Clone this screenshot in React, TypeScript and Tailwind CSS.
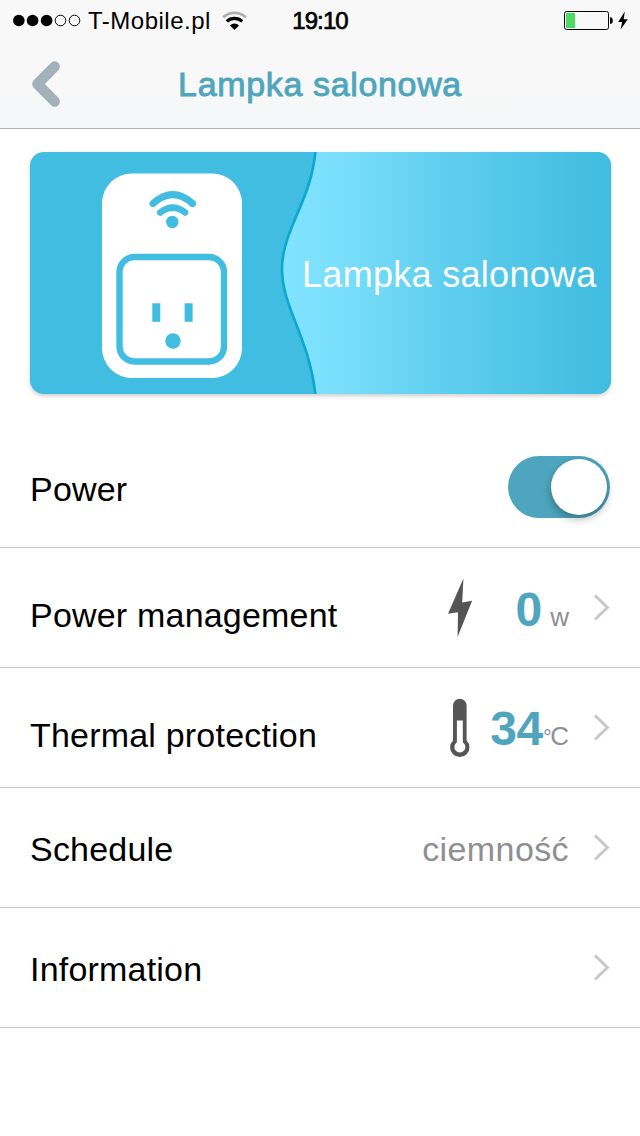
import React, { useState } from 'react';
import clsx from 'clsx';

interface RowProps {
  label: string;
  low?: boolean;
  onClick?: () => void;
  children?: React.ReactNode;
}

const SignalDots = () => (
  <svg width="70" height="14" viewBox="0 0 70 14">
    <g fill="#000">
      <circle cx="5.8" cy="7.5" r="5.8" />
      <circle cx="19.6" cy="7.5" r="5.8" />
      <circle cx="33.6" cy="7.5" r="5.8" />
    </g>
    <g fill="none" stroke="#000" strokeWidth="1">
      <circle cx="47.5" cy="7.5" r="5.3" />
      <circle cx="61.5" cy="7.5" r="5.3" />
    </g>
  </svg>
);

const StatusWifi = () => (
  <svg className="mt-[1px]" width="26" height="20" viewBox="0 0 26 20" fill="none">
    <path d="M1.2 6.4A16.6 16.6 0 0 1 23.8 6.4" stroke="#b0b0b0" strokeWidth="2.8" />
    <path d="M4.8 10.4A11.2 11.2 0 0 1 20.2 10.4" stroke="#000" strokeWidth="3.1" />
    <path d="M8 14.4A6.2 6.2 0 0 1 17 14.4L12.5 19Z" fill="#000" />
  </svg>
);

const Battery = () => (
  <svg width="66" height="22" viewBox="0 0 66 22">
    <rect x="0.5" y="2.5" width="44" height="18" rx="2" fill="none" stroke="#000" />
    <rect x="2" y="4" width="9" height="15" fill="#4cd964" />
    <path d="M46 8.2h1.2q1.6.8 1.6 3.3t-1.6 3.3H46z" fill="#000" />
    <path d="M60.8 2.4L54.2 13h4L56.6 20.4L63.8 10.2h-4.1z" fill="#000" />
  </svg>
);

const Chevron = () => (
  <svg className="shrink-0" width="18" height="28" viewBox="0 0 18 28" fill="none">
    <path d="M2 1.5L14.4 13.5L2 25.5" stroke="#c7c7cc" strokeWidth="3" />
  </svg>
);

const Bolt = () => (
  <svg width="40" height="60" viewBox="0 0 40 60">
    <path d="M23.4 0.6L8 35.8L18 34.2L17.6 59L32.1 22.8L22.2 24.6Z" fill="#555" />
  </svg>
);

const Thermometer = () => (
  <svg width="40" height="60" viewBox="0 0 40 60">
    <path d="M13 7.5a6.8 6.8 0 0 1 13.6 0V42.5a9.7 9.7 0 1 1 -13.6 0z" fill="#555" />
    <path d="M16.9 22.5h5.9V44.3a5.5 5.5 0 1 1 -5.9 0z" fill="#fff" />
  </svg>
);

const Banner = ({ name }: { name: string }) => (
  <div className="relative ml-[30px] mr-[29px] mt-[23px] h-[242px] overflow-hidden rounded-[14px] bg-[#41bde1] shadow-[0_2px_4px_rgba(0,0,0,0.2)]">
    <svg width="581" height="242" viewBox="0 0 581 242" fill="none">
      <defs>
        <linearGradient id="wave" gradientUnits="userSpaceOnUse" x1="252" y1="0" x2="581" y2="0">
          <stop offset="0" stopColor="#80e4ff" />
          <stop offset="0.17" stopColor="#7adffb" />
          <stop offset="0.5" stopColor="#5fceee" />
          <stop offset="1" stopColor="#3fbce0" />
        </linearGradient>
      </defs>
      <path d="M286 0C281 50 252 78 252 117C252 155 279 185 286 242H581V0Z" fill="url(#wave)" />
      <path d="M285.5 -1C281 50 252 78 252 117C252 155 279 185 285.5 243" stroke="#0da5d1" strokeWidth="2.6" />

      <rect x="72" y="21.5" width="140" height="204.5" rx="30" fill="#fff" />
      <g stroke="#41bde1" strokeLinecap="round">
        <path d="M123 51.6Q142.7 33.8 162.6 51.6" strokeWidth="7" />
        <path d="M130.2 60.6Q142.7 50.6 155.2 60.6" strokeWidth="6.4" />
        <rect x="89.5" y="105" width="104.5" height="104.5" rx="15" strokeWidth="6.4" />
      </g>
      <g fill="#41bde1">
        <circle cx="142.3" cy="70" r="6.2" />
        <rect x="122.3" y="151.3" width="8" height="18.5" />
        <rect x="154.6" y="151.3" width="8" height="18.5" />
        <circle cx="143" cy="189" r="7.7" />
      </g>
    </svg>
    {/* device name sits on the light part of the wave */}
    <span className="absolute left-[272px] top-[102px] whitespace-nowrap text-[36px] leading-[42px] tracking-[0.3px] text-white">
      {name}
    </span>
  </div>
);

const Switch = ({ on, onToggle }: { on: boolean; onToggle: () => void }) => (
  <button
    role="switch"
    aria-checked={on}
    onClick={onToggle}
    className={clsx(
      'mb-[2px] mr-[30px] flex h-[62px] w-[102px] items-center rounded-full px-[3px]',
      on ? 'justify-end bg-[#4da5be]' : 'justify-start bg-gray-200'
    )}
  >
    <span className="size-[56px] rounded-full bg-white shadow-[0_4px_9px_rgba(0,0,0,0.3)]" />
  </button>
);

const Row = ({ label, low, onClick, children }: RowProps) => (
  <div onClick={onClick} className="flex h-[120px] items-center justify-between border-b border-[#c8c7cc] pl-[30px]">
    <span className={clsx('text-[34px] leading-[40px] tracking-[0.2px] text-black', low ? 'pt-[15px]' : 'pt-[3px]')}>
      {label}
    </span>
    {children}
  </div>
);

export default function App() {
  const [power, setPower] = useState(true);

  return (
    <div className="h-[1136px] w-[640px] overflow-hidden bg-white font-['Liberation_Sans',Arial,sans-serif]">
      <header className="h-[129px] border-b border-[#b2b2b2] bg-linear-to-b from-[#f8f8f8] from-70% to-[#f3f7f8]">
        <div className="grid h-[40px] grid-cols-[1fr_60px_1fr] items-center">
          <div className="flex items-center pl-[13px]">
            <SignalDots />
            <span className="ml-[5px] mr-[11px] pt-[2px] text-[24px] leading-[28px] tracking-[0.5px]">T-Mobile.pl</span>
            <StatusWifi />
          </div>
          <span className="whitespace-nowrap pt-[2px] text-center text-[24px] leading-[28px] tracking-[-0.9px] [-webkit-text-stroke:0.7px_#000]">
            19:10
          </span>
          <div className="flex justify-end pr-[10px]">
            <Battery />
          </div>
        </div>

        <div className="grid h-[88px] grid-cols-[100px_1fr_100px] items-center">
          <button className="pl-[30px]" aria-label="Back">
            <svg width="34" height="50" viewBox="0 0 34 50" fill="none">
              <path d="M24.7 7.5L7.4 25L24.7 42.5" stroke="#a3b1ba" strokeWidth="10.4" strokeLinecap="round" strokeLinejoin="round" />
            </svg>
          </button>
          <h1 className="pb-[1px] text-center text-[34px] leading-[40px] tracking-[0.65px] text-[#4fa5bd] [-webkit-text-stroke:0.9px_#4fa5bd]">
            Lampka salonowa
          </h1>
        </div>
      </header>

      <Banner name="Lampka salonowa" />

      <main className="mt-[34px]">
        <Row label="Power">
          <Switch on={power} onToggle={() => setPower(!power)} />
        </Row>

        <Row label="Power management" low>
          <div className="flex items-center pr-[29px]">
            <Bolt />
            <div className="mr-[24px] flex w-[89px] items-baseline justify-end pt-[4px]">
              <span className="text-[48px] font-bold leading-[56px] text-[#4fa5bd]">0</span>
              <span className="ml-[8px] text-[26px] text-[#8e8e93]">w</span>
            </div>
            <Chevron />
          </div>
        </Row>

        <Row label="Thermal protection" low>
          <div className="flex items-center pr-[29px]">
            <Thermometer />
            <div className="mr-[24px] flex w-[89px] items-baseline justify-end pt-[4px]">
              <span className="text-[48px] font-bold leading-[56px] tracking-[-0.4px] text-[#4fa5bd]">34</span>
              <span className="pb-[4px] text-[22px] tracking-[-1.5px] text-[#8e8e93]">°</span>
              <span className="text-[26px] text-[#8e8e93]">C</span>
            </div>
            <Chevron />
          </div>
        </Row>

        <Row label="Schedule">
          <div className="flex items-center pr-[29px]">
            <span className="mr-[24px] pt-[3px] text-[34px] leading-[40px] tracking-[0.4px] text-[#8e8e93]">ciemność</span>
            <Chevron />
          </div>
        </Row>

        <Row label="Information">
          <div className="flex items-center pr-[29px]">
            <Chevron />
          </div>
        </Row>
      </main>
    </div>
  );
}
